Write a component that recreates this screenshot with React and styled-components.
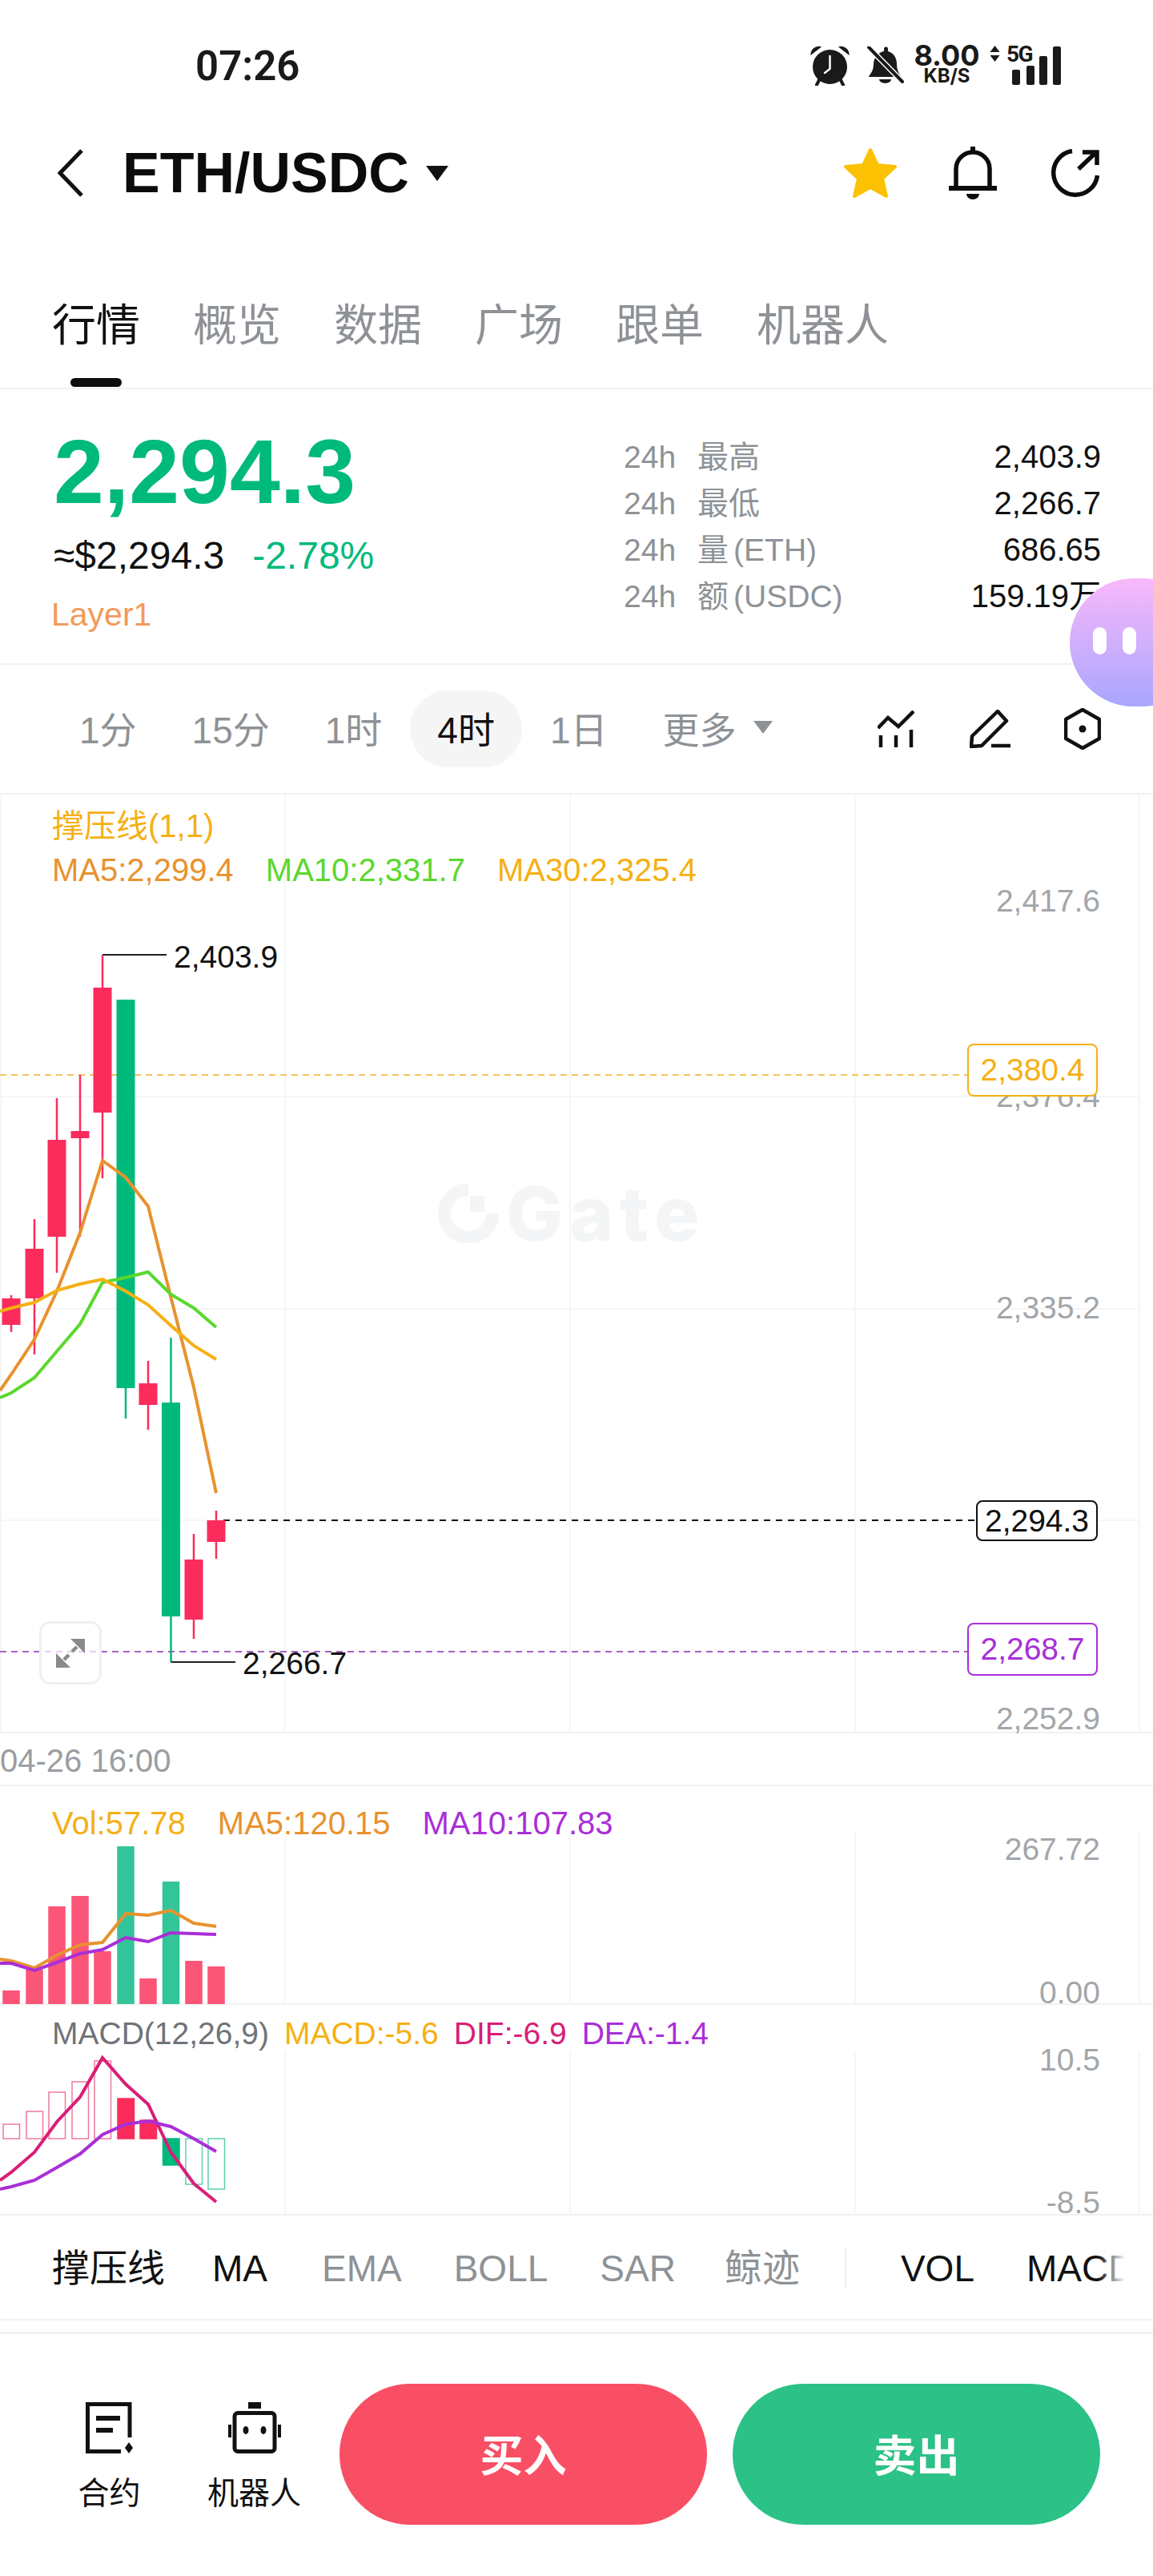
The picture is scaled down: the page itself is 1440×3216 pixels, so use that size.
import React from 'react'
import styled, { createGlobalStyle } from 'styled-components'

const FONT = '"Liberation Sans", "Noto Sans CJK SC", sans-serif'
const RED = '#fb2c5c'
const GREEN = '#00b97c'
const GRAY = '#8e9296'
const AXIS = '#a3a6aa'
const ORANGE = '#e8922e'
const YELLOW = '#f5b014'
const LIME = '#5bd82e'
const PURPLE = '#a92fd8'
const PINK = '#d81e78'
const GRID = '#f6f6f8'

const XS = [14, 43, 71, 100, 128, 157, 185, 213.5, 242, 270]
const GRID_X = [356, 712, 1068, 1423]

// body top/bottom, wick top/bottom, up = red here
const CANDLES = [
  [1621, 1654, 1617, 1663, 1],
  [1559, 1621, 1522, 1691, 1],
  [1423, 1544, 1371, 1589, 1],
  [1412, 1421, 1342, 1544, 1],
  [1233, 1389, 1192, 1471, 1],
  [1248, 1733, 1248, 1771, 0],
  [1727, 1754, 1699, 1785, 1],
  [1751, 2018, 1670, 2075, 0],
  [1947, 2022, 1915, 2046, 1],
  [1898, 1925, 1886, 1946, 1],
]
const MA5 = [1736, 1716, 1672, 1612, 1539, 1449, 1470, 1506, 1620, 1732, 1864]
const MA10 = [1745, 1739, 1720, 1687, 1653, 1601, 1595, 1588, 1616, 1633, 1657]
const MA30 = [1637, 1633, 1626, 1611, 1603, 1597, 1612, 1629, 1655, 1680, 1697]

const VOL_TOPS = [2486, 2460, 2381, 2368, 2437, 2306, 2471, 2350, 2449, 2456]
const VOL_GREEN = [5, 7]
const VOL_MA5 = [2447, 2449, 2458, 2442, 2429, 2426, 2390, 2392, 2386, 2402, 2406]
const VOL_MA10 = [2452, 2452, 2461, 2451, 2440, 2435, 2420, 2425, 2414, 2415, 2416]

const MACD_ZERO = 2671
const MACD_BARS = [2653, 2637, 2613, 2600, 2574, 2621, 2648, 2704, 2728, 2734]
const DIF = [2723, 2713, 2688, 2650, 2619, 2570, 2603, 2628, 2688, 2727, 2750]
const DEA = [2734, 2731, 2723, 2707, 2690, 2666, 2653, 2649, 2656, 2671, 2687]

const toPoints = ys => ys.map((y, i) => `${i === 0 ? 0 : XS[i - 1]},${y}`).join(' ')

const GlobalStyle = createGlobalStyle`
  html, body {
    margin: 0;
    padding: 0;
    background: #fff;
    font-family: ${FONT};
  }
  * {
    box-sizing: border-box;
  }
`

const Page = styled.div`
  position: relative;
  width: 1440px;
  height: 3216px;
  overflow: hidden;
  display: flex;
  flex-direction: column;
  background: #fff;
  color: #111;
`

const StatusBar = styled.div`
  height: 164px;
  flex: none;
  display: flex;
  align-items: center;
  padding: 0 115px 0 244px;
`

const Clock = styled.span`
  font-family: Roboto, ${FONT};
  font-size: 51px;
  font-weight: 600;
  color: #1a1a1a;
`

const StatusIcons = styled.div`
  margin-left: auto;
  display: flex;
  align-items: flex-start;
`

const Speed = styled.div`
  width: 79px;
  margin: -1px 14px 0;
  display: flex;
  flex-direction: column;
  align-items: center;
  font-family: Inter, ${FONT};
  font-weight: 700;
  color: #1a1a1a;
`

const SpeedValue = styled.span`
  font-size: 36px;
  line-height: 27px;
`

const SpeedUnit = styled.span`
  font-size: 24px;
  line-height: 18px;
  margin-top: 3px;
`

const SignalBox = styled.div`
  position: relative;
  width: 68px;
  height: 50px;
  margin-left: 8px;
`

const NetLabel = styled.span`
  position: absolute;
  left: 0;
  top: -1px;
  font-family: Roboto, ${FONT};
  font-size: 28px;
  line-height: 24px;
  font-weight: 700;
  letter-spacing: -1.5px;
  color: #1a1a1a;
`

const NavBar = styled.div`
  height: 104px;
  flex: none;
  display: flex;
  align-items: center;
  padding: 0 67px 0 72px;
`

const Title = styled.h1`
  margin: 0 0 0 49px;
  font-size: 70px;
  line-height: 1;
  font-weight: 700;
  color: #0c0c0c;
`

const NavActions = styled.div`
  margin-left: auto;
  display: flex;
  align-items: center;
`

const NavIcon = styled.svg`
  display: block;
  flex: none;
  margin-left: ${props => props.$ml || 0}px;
`

const TabBar = styled.div`
  height: 218px;
  flex: none;
  display: flex;
  gap: 66px;
  padding: 111px 0 0 65px;
  border-bottom: 2px solid #f1f1f1;
`

const Tab = styled.div`
  display: flex;
  flex-direction: column;
  align-items: center;
  gap: 39px;
  font-size: 55px;
  line-height: 54px;
  color: ${props => (props.$active ? '#111' : GRAY)};
`

const TabMark = styled.span`
  width: 64px;
  height: 11px;
  border-radius: 6px;
  background: ${props => (props.$active ? '#0c0c0c' : 'transparent')};
`

const Quote = styled.section`
  height: 344px;
  flex: none;
  display: flex;
  justify-content: space-between;
  padding: 0 65px 0 67px;
  border-bottom: 2px solid #f1f1f1;
`

const QuoteLeft = styled.div`
  padding-top: 48px;
  display: flex;
  flex-direction: column;
`

const Price = styled.div`
  font-size: 113px;
  line-height: 110px;
  font-weight: 700;
  color: ${GREEN};
`

const SubRow = styled.div`
  margin-top: 24px;
  display: flex;
  gap: 35px;
  font-size: 48px;
  line-height: 52px;
`

const Change = styled.span`
  color: ${GREEN};
`

const Sector = styled.div`
  margin: 25px 0 0 -3px;
  font-size: 41px;
  line-height: 44px;
  color: #f29a5a;
`

const Stats = styled.div`
  width: 596px;
  padding-top: 55px;
  display: flex;
  flex-direction: column;
`

const StatRow = styled.div`
  height: 58px;
  display: flex;
  align-items: center;
  justify-content: space-between;
  font-size: 39px;
  line-height: 1;
`

const StatLabel = styled.span`
  color: ${GRAY};
`

const StatPrefix = styled.span`
  margin-right: 27px;
`

const StatUnit = styled.span`
  margin-left: 6px;
`

const StatValue = styled.span`
  font-size: 40px;
`

const Bubble = styled.div`
  position: absolute;
  left: 1336px;
  top: 722px;
  width: 170px;
  height: 160px;
  border-radius: 80px;
  display: flex;
  align-items: center;
  gap: 20px;
  padding: 0 0 4px 29px;
  background: linear-gradient(180deg, #f8b8fa 0%, #a9a6ff 100%);
`

const BubbleEye = styled.span`
  width: 17px;
  height: 34px;
  border-radius: 9px;
  background: #fff;
`

const Periods = styled.div`
  height: 162px;
  flex: none;
  display: flex;
  align-items: center;
  gap: 1px;
  padding: 0 65px 0 65px;
  border-bottom: 2px solid #f1f1f1;
`

const Period = styled.div`
  height: 96px;
  padding: 0 34px 4px;
  border-radius: 48px;
  display: flex;
  align-items: center;
  font-size: 46px;
  color: ${props => (props.$active ? '#111' : GRAY)};
  background: ${props => (props.$active ? '#f5f5f5' : 'transparent')};
`

const Caret = styled.span`
  width: 0;
  height: 0;
  margin-left: ${props => props.$ml}px;
  border-left: ${props => props.$size}px solid transparent;
  border-right: ${props => props.$size}px solid transparent;
  border-top: ${props => props.$h}px solid ${props => props.$color};
`

const ChartTools = styled.div`
  margin-left: auto;
  display: flex;
  align-items: center;
  gap: 66px;
`

const ChartPanel = styled.div`
  position: relative;
  flex: none;
  height: ${props => props.$h}px;
  border-bottom: 2px solid #f1f1f1;
`

const ChartSvg = styled.svg`
  position: absolute;
  inset: 0;
  display: block;
`

const Legend = styled.div`
  position: absolute;
  left: 65px;
  top: ${props => props.$y}px;
  transform: translateY(-50%);
  display: flex;
  gap: ${props => props.$gap || 40}px;
  font-size: ${props => props.$size || 40}px;
  line-height: 1;
  white-space: nowrap;
`

const LegendItem = styled.span`
  color: ${props => props.$color};
`

const AxisLabel = styled.span`
  position: absolute;
  right: 66px;
  top: ${props => props.$y}px;
  transform: translateY(-50%);
  font-size: 39px;
  line-height: 1;
  color: ${AXIS};
`

const PriceTag = styled.div`
  position: absolute;
  right: 69px;
  top: ${props => props.$y}px;
  width: ${props => props.$w}px;
  height: ${props => props.$h}px;
  display: flex;
  align-items: center;
  justify-content: center;
  border: 2.5px solid ${props => props.$color};
  border-radius: 8px;
  background: #fff;
  font-size: 39px;
  color: ${props => props.$color};
`

const ExtremeLabel = styled.span`
  position: absolute;
  left: ${props => props.$x}px;
  top: ${props => props.$y}px;
  transform: translateY(-50%);
  font-size: 39px;
  line-height: 1;
  color: #111;
`

const Watermark = styled.div`
  position: absolute;
  left: 547px;
  top: 486px;
  display: flex;
  align-items: center;
  gap: 9px;
  font-family: Inter, ${FONT};
  font-size: 94px;
  line-height: 74px;
  font-weight: 800;
  letter-spacing: 8px;
  color: #f3f5f6;
`

const ExpandButton = styled.div`
  position: absolute;
  left: 49px;
  top: 1032px;
  width: 78px;
  height: 79px;
  display: flex;
  align-items: center;
  justify-content: center;
  border: 3px solid #f0f0f0;
  border-radius: 14px;
  background: rgba(255, 255, 255, 0.7);
`

const TimeRow = styled.div`
  height: 66px;
  flex: none;
  display: flex;
  align-items: center;
  padding-top: 4px;
  font-size: 40px;
  color: #9a9ea2;
  border-bottom: 2px solid #f1f1f1;
`

const IndicatorRow = styled.div`
  height: 131px;
  flex: none;
  display: flex;
  align-items: center;
  padding-top: 2px;
  border-bottom: 2px solid #f1f1f1;
`

const IndicatorTrack = styled.div`
  position: relative;
  width: 1405px;
  overflow: hidden;
  display: flex;
  align-items: center;
  gap: 65px;
  padding: 8px 0 8px 65px;
  font-size: 46px;
  line-height: 56px;
  white-space: nowrap;

  &::after {
    content: '';
    position: absolute;
    right: 0;
    top: 0;
    bottom: 0;
    width: 34px;
    background: linear-gradient(90deg, rgba(255, 255, 255, 0), #fff);
  }
`

const Indicator = styled.span`
  flex: none;
  margin-left: ${props => props.$ml || 0}px;
  font-size: ${props => props.$size || 46}px;
  color: ${props => (props.$on ? '#111' : GRAY)};
`

const IndicatorDivider = styled.span`
  flex: none;
  width: 2px;
  height: 50px;
  margin: 0 3px 0 -9px;
  background: #f1f1f1;
`

const Spacer = styled.div`
  height: 17px;
  flex: none;
  border-bottom: 3px solid #f1f1f1;
`

const BottomBar = styled.div`
  flex: 1;
  display: flex;
  align-items: flex-start;
  padding: 62px 65px 0 46px;
`

const Action = styled.div`
  width: 181px;
  padding-top: 23px;
  display: flex;
  flex-direction: column;
  align-items: center;
`

const ActionLabel = styled.span`
  margin-top: 32px;
  font-size: 39px;
  line-height: 36px;
  color: #111;
`

const TradeButton = styled.button`
  width: 459px;
  height: 176px;
  margin-left: ${props => props.$ml}px;
  padding: 0 0 3px;
  border: 0;
  border-radius: 88px;
  background: ${props => props.$bg};
  color: #fff;
  font-family: ${FONT};
  font-size: 54px;
  font-weight: 700;
`

const AlarmIcon = () => (
  <svg width="50" height="50" viewBox="0 0 50 50" style={{ display: 'block' }}>
    <circle cx="24.5" cy="26.5" r="21.5" fill="#1a1a1a" />
    <path d="M0.5 12 A10 10 0 0 1 14 1.5 Z" fill="#1a1a1a" />
    <path d="M48.5 12 A10 10 0 0 0 35 1.5 Z" fill="#1a1a1a" />
    <path d="M11 43 L8 49 M38 43 L41 49" stroke="#1a1a1a" strokeWidth="4" strokeLinecap="round" />
    <path d="M24.5 13 V29 L18 34" fill="none" stroke="#fff" strokeWidth="2.5" strokeLinecap="round" />
  </svg>
)

const MutedBellIcon = () => (
  <svg width="46" height="46" viewBox="0 0 46 46" style={{ marginLeft: 21, marginTop: 1, display: 'block' }}>
    <path d="M2 38 C2 36 8 32 8 22 C8 13 15 7 21 6 V3 a2.5 2.5 0 0 1 5 0 V6 C33 8 37 14 37 22 C37 32 42 36 42 38 Z" fill="#1a1a1a" />
    <path d="M15 41 H30 A7.5 5 0 0 1 15 41 Z" fill="#1a1a1a" />
    <path d="M-1 -2 L44 44" stroke="#fff" strokeWidth="7" />
    <path d="M2 1 L44 44" stroke="#1a1a1a" strokeWidth="4" strokeLinecap="round" />
  </svg>
)

const NetArrows = () => (
  <svg width="13" height="20" viewBox="0 0 13 20" style={{ display: 'block' }}>
    <path d="M6.5 0 L12.5 8 H0.5 Z M0.5 12 H12.5 L6.5 20 Z" fill="#1a1a1a" />
  </svg>
)

const SignalBars = () => (
  <ChartSvg width="68" height="50" viewBox="0 0 68 50">
    <rect x="7" y="30" width="10" height="19" rx="2" fill="#1a1a1a" />
    <rect x="25" y="25" width="10" height="24" rx="2" fill="#1a1a1a" />
    <rect x="41" y="13" width="10" height="36" rx="2" fill="#1a1a1a" />
    <rect x="58" y="1" width="10" height="48" rx="2" fill="#1a1a1a" />
  </ChartSvg>
)

const PriceChart = () => (
  <ChartSvg width="1440" height="1172" viewBox="0 992 1440 1172">
    {[1369, 1634, 1898].map(y => (
      <line key={y} x1="0" x2="1423" y1={y} y2={y} stroke={GRID} strokeWidth="2" />
    ))}
    {[1, ...GRID_X].map(x => (
      <line key={x} x1={x} x2={x} y1="992" y2="2164" stroke={GRID} strokeWidth="2" />
    ))}
    <line x1="0" x2="1210" y1="1342" y2="1342" stroke="#f3c35a" strokeWidth="2" strokeDasharray="8 6" />
    <line x1="0" x2="1210" y1="2062" y2="2062" stroke="#a75fc4" strokeWidth="2" strokeDasharray="8 6" />
    <line x1="279" x2="1220" y1="1898" y2="1898" stroke="#111" strokeWidth="2" strokeDasharray="8 7" />
    {CANDLES.map(([top, bottom, high, low, up], i) => (
      <g key={i} fill={up ? RED : GREEN}>
        <rect x={XS[i] - 1.25} y={high} width="2.5" height={low - high} />
        <rect x={XS[i] - 11.5} y={top} width="23" height={bottom - top} />
      </g>
    ))}
    <polyline points={toPoints(MA5)} fill="none" stroke={ORANGE} strokeWidth="4" />
    <polyline points={toPoints(MA10)} fill="none" stroke={LIME} strokeWidth="4" />
    <polyline points={toPoints(MA30)} fill="none" stroke={YELLOW} strokeWidth="4" />
    <polyline points="128,1192 128,1192 208,1192" fill="none" stroke="#222" strokeWidth="2" />
    <polyline points="213.5,2075 213.5,2075 294,2075" fill="none" stroke="#222" strokeWidth="2" />
    <rect x="127" y="1192" width="2" height="41" fill={RED} />
  </ChartSvg>
)

const VolumeChart = () => (
  <ChartSvg width="1440" height="273" viewBox="0 2231 1440 273">
    {GRID_X.map(x => (
      <line key={x} x1={x} x2={x} y1="2288" y2="2503" stroke={GRID} strokeWidth="2" />
    ))}
    {VOL_TOPS.map((top, i) => (
      <rect
        key={i}
        x={XS[i] - 10.75}
        y={top}
        width="21.5"
        height={2503 - top}
        fill={VOL_GREEN.includes(i) ? '#33c599' : '#fb5577'}
      />
    ))}
    <polyline points={toPoints(VOL_MA5)} fill="none" stroke={ORANGE} strokeWidth="4" />
    <polyline points={toPoints(VOL_MA10)} fill="none" stroke={PURPLE} strokeWidth="4" />
  </ChartSvg>
)

const MacdChart = () => (
  <ChartSvg width="1440" height="262" viewBox="0 2504 1440 262">
    {GRID_X.map(x => (
      <line key={x} x1={x} x2={x} y1="2561" y2="2766" stroke={GRID} strokeWidth="2" />
    ))}
    {MACD_BARS.map((end, i) => {
      const filled = i === 5 || i === 6 || i === 7
      const positive = end < MACD_ZERO
      const tone = positive ? (filled ? RED : '#f07a9a') : filled ? GREEN : '#5fcfae'
      return (
        <rect
          key={i}
          x={XS[i] - 10}
          y={Math.min(end, MACD_ZERO)}
          width="20.5"
          height={Math.abs(MACD_ZERO - end)}
          fill={filled ? tone : 'none'}
          stroke={tone}
          strokeWidth="1.5"
        />
      )
    })}
    <polyline points={toPoints(DIF)} fill="none" stroke={PINK} strokeWidth="4" />
    <polyline points={toPoints(DEA)} fill="none" stroke={PURPLE} strokeWidth="4" />
  </ChartSvg>
)

export default function App() {
  return (
    <Page>
      <GlobalStyle />

      <StatusBar>
        <Clock>07:26</Clock>
        <StatusIcons>
          <AlarmIcon />
          <MutedBellIcon />
          <Speed>
            <SpeedValue>8.00</SpeedValue>
            <SpeedUnit>KB/S</SpeedUnit>
          </Speed>
          <NetArrows />
          <SignalBox>
            <SignalBars />
            <NetLabel>5G</NetLabel>
          </SignalBox>
        </StatusIcons>
      </StatusBar>

      <NavBar>
        <NavIcon width="32" height="60" viewBox="0 0 32 60">
          <polyline points="30,2 3,30 30,58" fill="none" stroke="#111" strokeWidth="5" />
        </NavIcon>
        <Title>ETH/USDC</Title>
        <Caret $size={14} $h={19} $ml={21} $color="#111" />
        <NavActions>
          <NavIcon width="68" height="64" viewBox="0 0 68 64">
            <path
              d="M34 3 L43 22 L65 24 L49 39 L54 61 L34 50 L14 61 L19 39 L3 24 L25 22 Z"
              fill="#fdc104"
              stroke="#fdc104"
              strokeWidth="4"
              strokeLinejoin="round"
            />
          </NavIcon>
          <NavIcon $ml={64} width="60" height="66" viewBox="0 0 60 66">
            <path d="M30 0 V6" stroke="#0c0c0c" strokeWidth="6" />
            <path d="M9 52 V28 a21 21 0 0 1 42 0 V52" fill="none" stroke="#0c0c0c" strokeWidth="5.5" />
            <path d="M0 52 H60" stroke="#0c0c0c" strokeWidth="6" />
            <path d="M22 59 H38 A8 7 0 0 1 22 59 Z" fill="#0c0c0c" />
          </NavIcon>
          <NavIcon $ml={68} width="60" height="60" viewBox="0 0 60 60">
            <path
              d="M26 2.5 A27.5 27.5 0 1 0 57.5 33"
              fill="none"
              stroke="#0c0c0c"
              strokeWidth="5.5"
            />
            <path d="M34 25 L55 5 M39 4 H57 V20" fill="none" stroke="#0c0c0c" strokeWidth="5.5" />
          </NavIcon>
        </NavActions>
      </NavBar>

      <TabBar>
        {['行情', '概览', '数据', '广场', '跟单', '机器人'].map((label, i) => (
          <Tab key={label} $active={i === 0}>
            {label}
            <TabMark $active={i === 0} />
          </Tab>
        ))}
      </TabBar>

      <Quote>
        <QuoteLeft>
          <Price>2,294.3</Price>
          <SubRow>
            <span>≈$2,294.3</span>
            <Change>-2.78%</Change>
          </SubRow>
          <Sector>Layer1</Sector>
        </QuoteLeft>
        <Stats>
          <StatRow>
            <StatLabel><StatPrefix>24h</StatPrefix>最高</StatLabel>
            <StatValue>2,403.9</StatValue>
          </StatRow>
          <StatRow>
            <StatLabel><StatPrefix>24h</StatPrefix>最低</StatLabel>
            <StatValue>2,266.7</StatValue>
          </StatRow>
          <StatRow>
            <StatLabel><StatPrefix>24h</StatPrefix>量<StatUnit>(ETH)</StatUnit></StatLabel>
            <StatValue>686.65</StatValue>
          </StatRow>
          <StatRow>
            <StatLabel><StatPrefix>24h</StatPrefix>额<StatUnit>(USDC)</StatUnit></StatLabel>
            <StatValue>159.19万</StatValue>
          </StatRow>
        </Stats>
      </Quote>

      <Bubble>
        <BubbleEye />
        <BubbleEye />
      </Bubble>

      <Periods>
        <Period>1分</Period>
        <Period>15分</Period>
        <Period>1时</Period>
        <Period $active>4时</Period>
        <Period>1日</Period>
        <Period>
          更多
          <Caret $size={12} $h={16} $ml={21} $color={GRAY} />
        </Period>
        <ChartTools>
          <NavIcon width="46" height="47" viewBox="0 0 46 47">
            <polyline points="0.5,22 13,9 26,20 45,1" fill="none" stroke="#111" strokeWidth="4.5" />
            <path d="M4 31 V46 M23 31 V46 M42 24 V46" stroke="#111" strokeWidth="4.5" />
          </NavIcon>
          <NavIcon $ml={3} width="52" height="48" viewBox="0 0 52 48">
            <path d="M2 46 L3 33 L35 2 L46 14 L15 45 Z" fill="none" stroke="#111" strokeWidth="4.5" strokeLinejoin="round" />
            <path d="M27 45 H51" stroke="#111" strokeWidth="4.5" />
          </NavIcon>
          <NavIcon width="46" height="52" viewBox="0 0 46 52">
            <path d="M23 2 L44 14 V38 L23 50 L2 38 V14 Z" fill="none" stroke="#111" strokeWidth="4.5" strokeLinejoin="round" />
            <circle cx="23" cy="26" r="4.5" fill="#111" />
          </NavIcon>
        </ChartTools>
      </Periods>

      <ChartPanel $h={1172}>
        <PriceChart />
        <Watermark>
          <svg width="76" height="74" viewBox="0 0 76 74">
            <path d="M38 7 A30 30 0 1 0 68 37" fill="none" stroke="#f3f5f6" strokeWidth="16" />
            <rect x="40" y="15" width="18" height="20" fill="#f3f5f6" />
          </svg>
          Gate
        </Watermark>
        <Legend $y={39}>
          <LegendItem $color={YELLOW}>撑压线(1,1)</LegendItem>
        </Legend>
        <Legend $y={94}>
          <LegendItem $color={ORANGE}>MA5:2,299.4</LegendItem>
          <LegendItem $color={LIME}>MA10:2,331.7</LegendItem>
          <LegendItem $color={YELLOW}>MA30:2,325.4</LegendItem>
        </Legend>
        <AxisLabel $y={132}>2,417.6</AxisLabel>
        <AxisLabel $y={376}>2,376.4</AxisLabel>
        <AxisLabel $y={640}>2,335.2</AxisLabel>
        <AxisLabel $y={1153}>2,252.9</AxisLabel>
        <PriceTag $y={311} $w={163} $h={66} $color={YELLOW}>2,380.4</PriceTag>
        <PriceTag $y={881} $w={152} $h={51} $color="#111">2,294.3</PriceTag>
        <PriceTag $y={1034} $w={163} $h={66} $color={PURPLE}>2,268.7</PriceTag>
        <ExtremeLabel $x={217} $y={202}>2,403.9</ExtremeLabel>
        <ExtremeLabel $x={303} $y={1084}>2,266.7</ExtremeLabel>
        <ExpandButton>
          <svg width="36" height="36" viewBox="0 0 36 36">
            <path d="M18 0 H36 V18 Z M0 36 V18 L18 36 Z" fill="#8a8a8a" />
            <path d="M26 10 L20 16 M16 20 L10 26" stroke="#8a8a8a" strokeWidth="4.5" />
          </svg>
        </ExpandButton>
      </ChartPanel>

      <TimeRow>04-26 16:00</TimeRow>

      <ChartPanel $h={273}>
        <VolumeChart />
        <Legend $y={46}>
          <LegendItem $color={YELLOW}>Vol:57.78</LegendItem>
          <LegendItem $color={ORANGE}>MA5:120.15</LegendItem>
          <LegendItem $color={PURPLE}>MA10:107.83</LegendItem>
        </Legend>
        <AxisLabel $y={78}>267.72</AxisLabel>
        <AxisLabel $y={257}>0.00</AxisLabel>
      </ChartPanel>

      <ChartPanel $h={263}>
        <MacdChart />
        <Legend $y={35} $gap={19} $size={39}>
          <LegendItem $color="#6f7378">MACD(12,26,9)</LegendItem>
          <LegendItem $color={YELLOW}>MACD:-5.6</LegendItem>
          <LegendItem $color={PINK}>DIF:-6.9</LegendItem>
          <LegendItem $color={PURPLE}>DEA:-1.4</LegendItem>
        </Legend>
        <AxisLabel $y={68}>10.5</AxisLabel>
        <AxisLabel $y={246}>-8.5</AxisLabel>
      </ChartPanel>

      <IndicatorRow>
        <IndicatorTrack>
          <Indicator $on $size={47}>撑压线</Indicator>
          <Indicator $on $ml={-6}>MA</Indicator>
          <Indicator $ml={3}>EMA</Indicator>
          <Indicator>BOLL</Indicator>
          <Indicator>SAR</Indicator>
          <Indicator $ml={-4} $size={47}>鲸迹</Indicator>
          <IndicatorDivider />
          <Indicator $on>VOL</Indicator>
          <Indicator $on>MACD</Indicator>
        </IndicatorTrack>
      </IndicatorRow>

      <Spacer />

      <BottomBar>
        <Action>
          <svg width="60" height="64" viewBox="0 0 60 64">
            <path d="M55 44 V2.5 H2.5 V61.5 H44" fill="none" stroke="#111" strokeWidth="5" />
            <path d="M13 20 H43 M13 35 H34" stroke="#111" strokeWidth="6" />
            <path d="M54 50 L59 57 L54 64 L49 57 Z" fill="#111" />
          </svg>
          <ActionLabel>合约</ActionLabel>
        </Action>
        <Action>
          <svg width="66" height="64" viewBox="0 0 66 64">
            <path d="M25 0 H41 V8 H25 Z" fill="#111" />
            <rect x="8" y="13.5" width="50" height="48" rx="4" fill="none" stroke="#111" strokeWidth="5" />
            <path d="M2 28 V44 M64 28 V44" stroke="#111" strokeWidth="4" />
            <ellipse cx="22" cy="35" rx="3.5" ry="5" fill="#111" />
            <ellipse cx="44" cy="35" rx="3.5" ry="5" fill="#111" />
          </svg>
          <ActionLabel>机器人</ActionLabel>
        </Action>
        <TradeButton $ml={16} $bg="#f94f65">买入</TradeButton>
        <TradeButton $ml={32} $bg="#2bc187">卖出</TradeButton>
      </BottomBar>
    </Page>
  )
}
